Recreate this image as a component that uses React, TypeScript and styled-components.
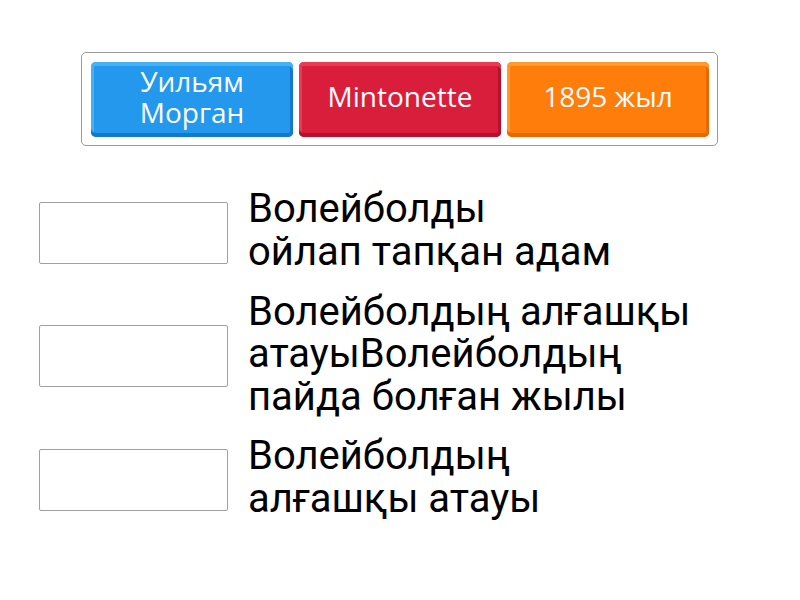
import React from "react";
import styled, { createGlobalStyle } from "styled-components";

const Global = createGlobalStyle`
  html, body { margin: 0; padding: 0; background: #fff; }
  body { font-family: Roboto, "Liberation Sans", sans-serif; }
`;

const Page = styled.div`
  width: 800px;
  height: 600px;
  overflow: hidden;
`;

const Tray = styled.div`
  box-sizing: border-box;
  margin: 52px 0 0 81px;
  width: 637px;
  height: 94px;
  padding: 9px 8px 9px 9px;
  border: 1px solid #9a9a9a;
  border-radius: 5px;
  display: flex;
  gap: 6px;
`;

const palettes = {
  blue: { base: "#2398ec", top: "#45b2f7", bottom: "#1479cc" },
  red: { base: "#d81e3a", top: "#ea3b55", bottom: "#b8102a" },
  orange: { base: "#ff7d0a", top: "#ff9a2e", bottom: "#e86800" },
} as const;

type Tone = keyof typeof palettes;

const Tile = styled.div<{ $tone: Tone }>`
  box-sizing: border-box;
  flex: 1;
  height: 75px;
  padding-bottom: 6px;
  border-radius: 5px;
  background: ${(p) => palettes[p.$tone].base};
  box-shadow: inset 0 4px 0 ${(p) => palettes[p.$tone].top},
    inset 0 -4px 0 ${(p) => palettes[p.$tone].bottom},
    inset 3px 0 0 ${(p) => palettes[p.$tone].top},
    inset -3px 0 0 ${(p) => palettes[p.$tone].bottom};
  display: flex;
  align-items: center;
  justify-content: center;
  text-align: center;
  color: #fff;
  font-family: "Open Sans", Roboto, sans-serif;
  font-weight: 500;
  font-size: 28px;
  line-height: 31px;
`;

const List = styled.div`
  margin-top: 25px;
  display: flex;
  flex-direction: column;
`;

const Row = styled.div`
  height: 123.5px;
  display: flex;
  align-items: center;
  gap: 20px;
  padding-left: 39px;
`;

const Slot = styled.div`
  box-sizing: border-box;
  width: 189px;
  height: 62px;
  border: 1px solid #a0a0a0;
  border-radius: 2px;
  flex-shrink: 0;
`;

const Label = styled.div`
  font-family: Roboto, sans-serif;
  font-size: 40px;
  line-height: 42.5px;
  color: #000;
  width: 520px;
  margin-top: -4px;
`;

const tiles: { tone: Tone; text: React.ReactNode }[] = [
  { tone: "blue", text: <>Уильям<br />Морган</> },
  { tone: "red", text: "Mintonette" },
  { tone: "orange", text: "1895 жыл" },
];

const rows: React.ReactNode[] = [
  <>Волейболды<br />ойлап тапқан адам</>,
  <>Волейболдың алғашқы<br />атауыВолейболдың<br />пайда болған жылы</>,
  <>Волейболдың<br />алғашқы атауы</>,
];

export default function App() {
  return (
    <Page>
      <Global />
      <Tray>
        {tiles.map((t, i) => (
          <Tile key={i} $tone={t.tone}>{t.text}</Tile>
        ))}
      </Tray>
      <List>
        {rows.map((r, i) => (
          <Row key={i}>
            <Slot />
            <Label>{r}</Label>
          </Row>
        ))}
      </List>
    </Page>
  );
}
